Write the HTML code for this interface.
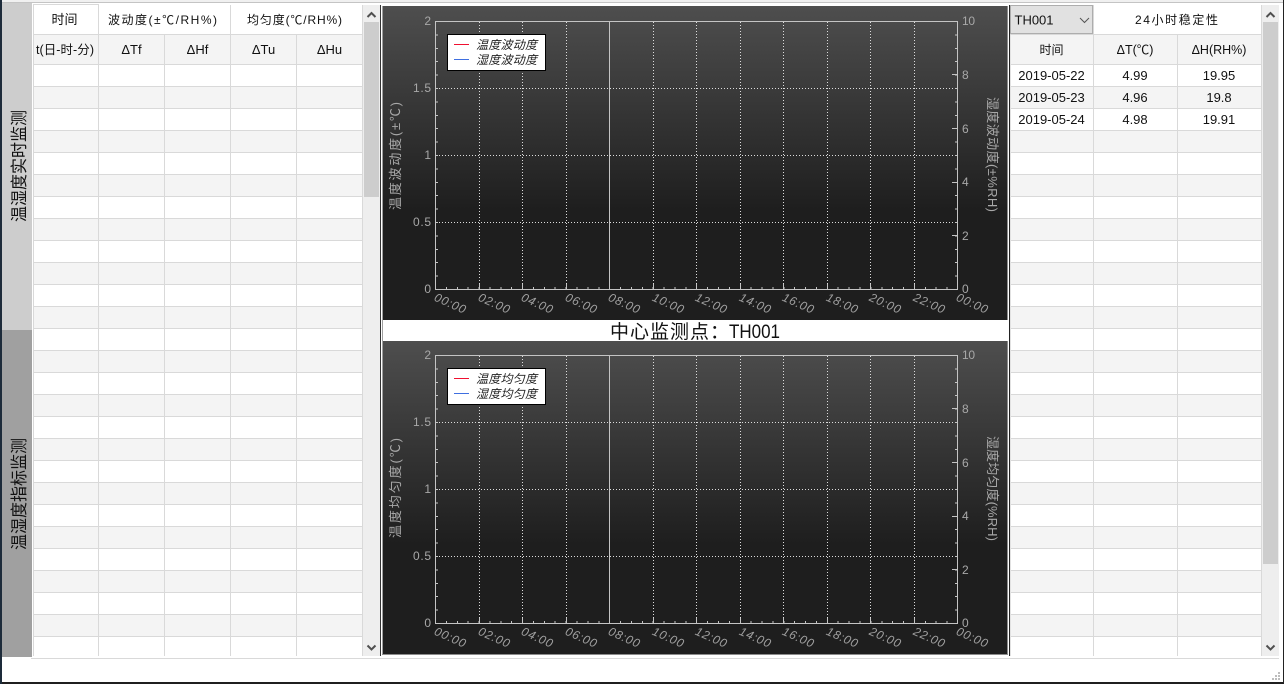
<!DOCTYPE html>
<html lang="zh">
<head>
<meta charset="utf-8">
<title>温湿度监测</title>
<style>
html,body{margin:0;padding:0;width:1284px;height:684px;overflow:hidden;background:#fff}
svg{display:block;position:absolute;left:0;top:0}
text{font-family:"Liberation Sans","Noto Sans CJK SC",sans-serif;fill:#111;font-size:13px}
.m{text-anchor:middle}
.e{text-anchor:end}
.t{fill:#a8a8a8;font-size:12px}
.x{fill:#a0a0a0;font-size:12px;font-style:italic;text-anchor:middle}
.a{fill:#a8a8a8;font-size:13px;text-anchor:middle}
.l{fill:#222;font-size:12px;font-style:italic}
.c{shape-rendering:crispEdges}
</style>
</head>
<body>
<svg width="1284" height="684" viewBox="0 0 1284 684" xmlns="http://www.w3.org/2000/svg">
<defs>
<linearGradient id="g" x1="0" y1="0" x2="0" y2="1">
<stop offset="0" stop-color="#4e4e4e"/>
<stop offset="0.65" stop-color="#1e1e1e"/>
<stop offset="1" stop-color="#1e1e1e"/>
</linearGradient>
<pattern id="r" patternUnits="userSpaceOnUse" x="0" y="65" width="10" height="44">
<rect width="10" height="44" fill="#fff"/>
<rect y="22" width="10" height="22" fill="#f4f4f4"/>
<rect y="21" width="10" height="1" fill="#d9d9d9"/>
<rect y="43" width="10" height="1" fill="#d9d9d9"/>
</pattern>
<g id="plot" class="c">
<g stroke="#dcdcdc" stroke-dasharray="1 2" fill="none">
<path d="M436 88.5H957M436 155.5H957M436 222.5H957"/>
<path d="M479.5 22V285M522.5 22V285M566.5 22V285M653.5 22V285M696.5 22V285M740.5 22V285M783.5 22V285M827.5 22V285M870.5 22V285M914.5 22V285"/>
</g>
<path d="M609.5 21V289" stroke="#c4c4c4" fill="none"/>
<path d="M479.5 284V289M522.5 284V289M566.5 284V289M653.5 284V289M696.5 284V289M740.5 284V289M783.5 284V289M827.5 284V289M870.5 284V289M914.5 284V289" stroke="#c4c4c4" fill="none"/>
<path d="M435 21.5H958M435.5 21V290M435 289.5H958M957.5 21V290" stroke="#c4c4c4" fill="none"/>
<line x1="435" y1="288" x2="957" y2="288" stroke="#c4c4c4" stroke-width="2" stroke-dasharray="1 9.885"/>
<line x1="437" y1="21" x2="437" y2="289" stroke="#c4c4c4" stroke-width="2" stroke-dasharray="1 12.4"/>
<line x1="956" y1="21" x2="956" y2="289" stroke="#c4c4c4" stroke-width="2" stroke-dasharray="1 12.4"/>
<path d="M952 74.5H957M952 128.5H957M952 182.5H957M952 235.5H957" stroke="#c4c4c4" fill="none"/>
</g>
</defs>

<!-- window -->
<rect width="1284" height="684" fill="#fff"/>
<g class="c">
<rect y="0" width="1284" height="2" fill="#f0f0f0"/>
<rect y="2" width="1284" height="1" fill="#c4c4c4"/>
<rect y="682" width="1284" height="2" fill="#1f1f1f"/>
<rect x="0" width="2" height="684" fill="#1d2b3a"/>
<rect x="1283" width="1" height="684" fill="#222"/>

<!-- tabs -->
<rect x="2" y="3" width="30" height="327" fill="#cdcdcd"/>
<rect x="2" y="330" width="30" height="327" fill="#a0a0a0"/>

<!-- left table -->
<rect x="33" y="65" width="329" height="591" fill="url(#r)"/>
<rect x="33" y="35" width="329" height="29" fill="#f4f4f4"/>
<rect x="33" y="4" width="66" height="1" fill="#d9d9d9"/>
<rect x="33" y="34" width="329" height="1" fill="#d9d9d9"/>
<rect x="33" y="64" width="329" height="1" fill="#d9d9d9"/>
<rect x="33" y="4" width="1" height="652" fill="#d9d9d9"/>
<rect x="98" y="5" width="1" height="651" fill="#d9d9d9"/>
<rect x="164" y="34" width="1" height="622" fill="#d9d9d9"/>
<rect x="230" y="5" width="1" height="651" fill="#d9d9d9"/>
<rect x="296" y="34" width="1" height="622" fill="#d9d9d9"/>
<rect x="362" y="5" width="1" height="651" fill="#d9d9d9"/>

<!-- left scrollbar -->
<rect x="363" y="5" width="17" height="651" fill="#eeeeee"/>
<rect x="364" y="22" width="15" height="175" fill="#cdcdcd"/>

<!-- right table -->
<rect x="1010" y="65" width="251" height="591" fill="url(#r)"/>
<rect x="1010" y="35" width="251" height="29" fill="#f4f4f4"/>
<rect x="1010" y="34" width="251" height="1" fill="#d9d9d9"/>
<rect x="1010" y="64" width="251" height="1" fill="#d9d9d9"/>
<rect x="1010" y="35" width="1" height="621" fill="#e2e2e2"/>
<rect x="1093" y="5" width="1" height="651" fill="#d9d9d9"/>
<rect x="1177" y="34" width="1" height="622" fill="#d9d9d9"/>
<rect x="1261" y="5" width="1" height="651" fill="#d9d9d9"/>
<rect x="1262" y="5" width="17" height="651" fill="#eeeeee"/>
<rect x="1263" y="22" width="15" height="542" fill="#cdcdcd"/>

<!-- combo -->
<rect x="1010.5" y="5.5" width="82" height="28" fill="#e1e1e1" stroke="#adadad"/>

<!-- bottom rule -->
<rect x="31" y="658" width="1248" height="1" fill="#d9d9d9"/>

<!-- chart frames -->
<rect x="380" y="5" width="1" height="651" fill="#333"/>
<rect x="382" y="6" width="1" height="649" fill="#a0a0a0"/>
<rect x="1009" y="5" width="1" height="651" fill="#222"/>
<rect x="383" y="6" width="624" height="314" fill="url(#g)"/>
<rect x="383" y="341" width="624" height="313" fill="url(#g)"/>
<rect x="1007" y="6" width="1" height="314" fill="#8c8c8c"/>
<rect x="1007" y="341" width="1" height="314" fill="#8c8c8c"/>
<rect x="382" y="654" width="626" height="1" fill="#8c8c8c"/>
</g>

<!-- scroll chevrons -->
<g fill="none" stroke="#505050" stroke-width="2">
<path d="M367.5 17L371.5 13L375.500 17"/>
<path d="M367.500 645.500L371.500 649.500L375.500 645.500"/>
<path d="M1266.500 17L1270.500 13L1274.500 17"/>
<path d="M1266.500 645.500L1270.500 649.500L1274.500 645.500"/>
</g>
<path d="M1080 18L1084.500 22.500L1089 18" fill="none" stroke="#555" stroke-width="1"/>

<!-- resize grip -->
<g fill="#bdbdbd" class="c">
<rect x="1278" y="672" width="2" height="2"/>
<rect x="1275" y="675" width="2" height="2"/>
<rect x="1278" y="675" width="2" height="2"/>
<rect x="1272" y="678" width="2" height="2"/>
<rect x="1275" y="678" width="2" height="2"/>
<rect x="1278" y="678" width="2" height="2"/>
</g>

<!-- tab text -->
<text class="m" transform="translate(25,166) rotate(-90)" style="font-size:17px" textLength="112" lengthAdjust="spacingAndGlyphs">温湿度实时监测</text>
<text class="m" transform="translate(25,494) rotate(-90)" style="font-size:17px" textLength="112" lengthAdjust="spacingAndGlyphs">温湿度指标监测</text>

<!-- left table text -->
<text class="m" x="64.500" y="24">时间</text>
<text x="108" y="24" style="font-size:12px" textLength="109">波动度(±℃/RH%)</text>
<text x="247" y="24" style="font-size:12px" textLength="95">均匀度(℃/RH%)</text>
<text x="36" y="54" style="font-size:12.500px" textLength="58">t(日-时-分)</text>
<text class="m" x="131.500" y="54">ΔTf</text>
<text class="m" x="197.500" y="54">ΔHf</text>
<text class="m" x="263.500" y="54">ΔTu</text>
<text class="m" x="329.500" y="54">ΔHu</text>

<!-- right table text -->
<text x="1014.500" y="24.500">TH001</text>
<text x="1135" y="24" style="font-size:12px" textLength="83">24小时稳定性</text>
<text class="m" x="1051.500" y="54" style="font-size:12px">时间</text>
<text class="m" x="1135" y="54" style="font-size:12.500px">ΔT(℃)</text>
<text class="m" x="1219" y="54" style="font-size:12.500px">ΔH(RH%)</text>
<text class="m" x="1051.500" y="80">2019-05-22</text>
<text class="m" x="1135" y="80">4.99</text>
<text class="m" x="1219" y="80">19.95</text>
<text class="m" x="1051.500" y="102">2019-05-23</text>
<text class="m" x="1135" y="102">4.96</text>
<text class="m" x="1219" y="102">19.8</text>
<text class="m" x="1051.500" y="124">2019-05-24</text>
<text class="m" x="1135" y="124">4.98</text>
<text class="m" x="1219" y="124">19.91</text>

<!-- chart plots -->
<use href="#plot"/>
<use href="#plot" y="334"/>

<!-- chart 1 labels -->
<g>
<text class="t e" x="431" y="25">2</text>
<text class="t" x="413" y="92" textLength="18">1.5</text>
<text class="t e" x="431" y="159">1</text>
<text class="t" x="413" y="226" textLength="18">0.5</text>
<text class="t e" x="431" y="293">0</text>
<text class="t" x="962" y="25" textLength="13">10</text>
<text class="t" x="962" y="79">8</text>
<text class="t" x="962" y="133">6</text>
<text class="t" x="962" y="186">4</text>
<text class="t" x="962" y="240">2</text>
<text class="t" x="962" y="293">0</text>
<text class="a" transform="translate(400,156) rotate(-90)" textLength="108">温度波动度(±℃)</text>
<text class="a" transform="translate(988,154.500) rotate(90)" textLength="115">湿度波动度(±%RH)</text>
<text class="x" transform="translate(448.500,307) rotate(24)" textLength="33">00:00</text>
<text class="x" transform="translate(492.500,307) rotate(24)" textLength="33">02:00</text>
<text class="x" transform="translate(535.500,307) rotate(24)" textLength="33">04:00</text>
<text class="x" transform="translate(579.500,307) rotate(24)" textLength="33">06:00</text>
<text class="x" transform="translate(622.500,307) rotate(24)" textLength="33">08:00</text>
<text class="x" transform="translate(666.500,307) rotate(24)" textLength="33">10:00</text>
<text class="x" transform="translate(709.500,307) rotate(24)" textLength="33">12:00</text>
<text class="x" transform="translate(753.500,307) rotate(24)" textLength="33">14:00</text>
<text class="x" transform="translate(796.500,307) rotate(24)" textLength="33">16:00</text>
<text class="x" transform="translate(840.500,307) rotate(24)" textLength="33">18:00</text>
<text class="x" transform="translate(883.500,307) rotate(24)" textLength="33">20:00</text>
<text class="x" transform="translate(927.500,307) rotate(24)" textLength="33">22:00</text>
<text class="x" transform="translate(970.500,307) rotate(24)" textLength="33">00:00</text>
<rect class="c" x="447.500" y="34.500" width="98" height="36" fill="#fff" stroke="#000"/>
<rect class="c" x="454" y="44" width="15" height="1" fill="#f01030"/>
<rect class="c" x="454" y="59" width="15" height="1" fill="#3f6fe0"/>
<text class="l" x="476" y="49" textLength="61">温度波动度</text>
<text class="l" x="476" y="64" textLength="61">湿度波动度</text>
</g>

<!-- title -->
<text x="610" y="338" style="font-size:19px" textLength="119">中心监测点：</text>
<text x="729" y="338" style="font-size:19px" textLength="51" lengthAdjust="spacingAndGlyphs">TH001</text>

<!-- chart 2 labels -->
<g>
<text class="t e" x="431" y="359">2</text>
<text class="t" x="413" y="426" textLength="18">1.5</text>
<text class="t e" x="431" y="493">1</text>
<text class="t" x="413" y="560" textLength="18">0.5</text>
<text class="t e" x="431" y="627">0</text>
<text class="t" x="962" y="359" textLength="13">10</text>
<text class="t" x="962" y="413">8</text>
<text class="t" x="962" y="467">6</text>
<text class="t" x="962" y="520">4</text>
<text class="t" x="962" y="574">2</text>
<text class="t" x="962" y="627">0</text>
<text class="a" transform="translate(400,488) rotate(-90)" textLength="100">温度均匀度(℃)</text>
<text class="a" transform="translate(988,488.500) rotate(90)" textLength="105">湿度均匀度(%RH)</text>
<text class="x" transform="translate(448.500,641) rotate(24)" textLength="33">00:00</text>
<text class="x" transform="translate(492.500,641) rotate(24)" textLength="33">02:00</text>
<text class="x" transform="translate(535.500,641) rotate(24)" textLength="33">04:00</text>
<text class="x" transform="translate(579.500,641) rotate(24)" textLength="33">06:00</text>
<text class="x" transform="translate(622.500,641) rotate(24)" textLength="33">08:00</text>
<text class="x" transform="translate(666.500,641) rotate(24)" textLength="33">10:00</text>
<text class="x" transform="translate(709.500,641) rotate(24)" textLength="33">12:00</text>
<text class="x" transform="translate(753.500,641) rotate(24)" textLength="33">14:00</text>
<text class="x" transform="translate(796.500,641) rotate(24)" textLength="33">16:00</text>
<text class="x" transform="translate(840.500,641) rotate(24)" textLength="33">18:00</text>
<text class="x" transform="translate(883.500,641) rotate(24)" textLength="33">20:00</text>
<text class="x" transform="translate(927.500,641) rotate(24)" textLength="33">22:00</text>
<text class="x" transform="translate(970.500,641) rotate(24)" textLength="33">00:00</text>
<rect class="c" x="447.500" y="368.500" width="98" height="36" fill="#fff" stroke="#000"/>
<rect class="c" x="454" y="378" width="15" height="1" fill="#f01030"/>
<rect class="c" x="454" y="393" width="15" height="1" fill="#3f6fe0"/>
<text class="l" x="476" y="383" textLength="61">温度均匀度</text>
<text class="l" x="476" y="398" textLength="61">湿度均匀度</text>
</g>
</svg>
</body>
</html>
